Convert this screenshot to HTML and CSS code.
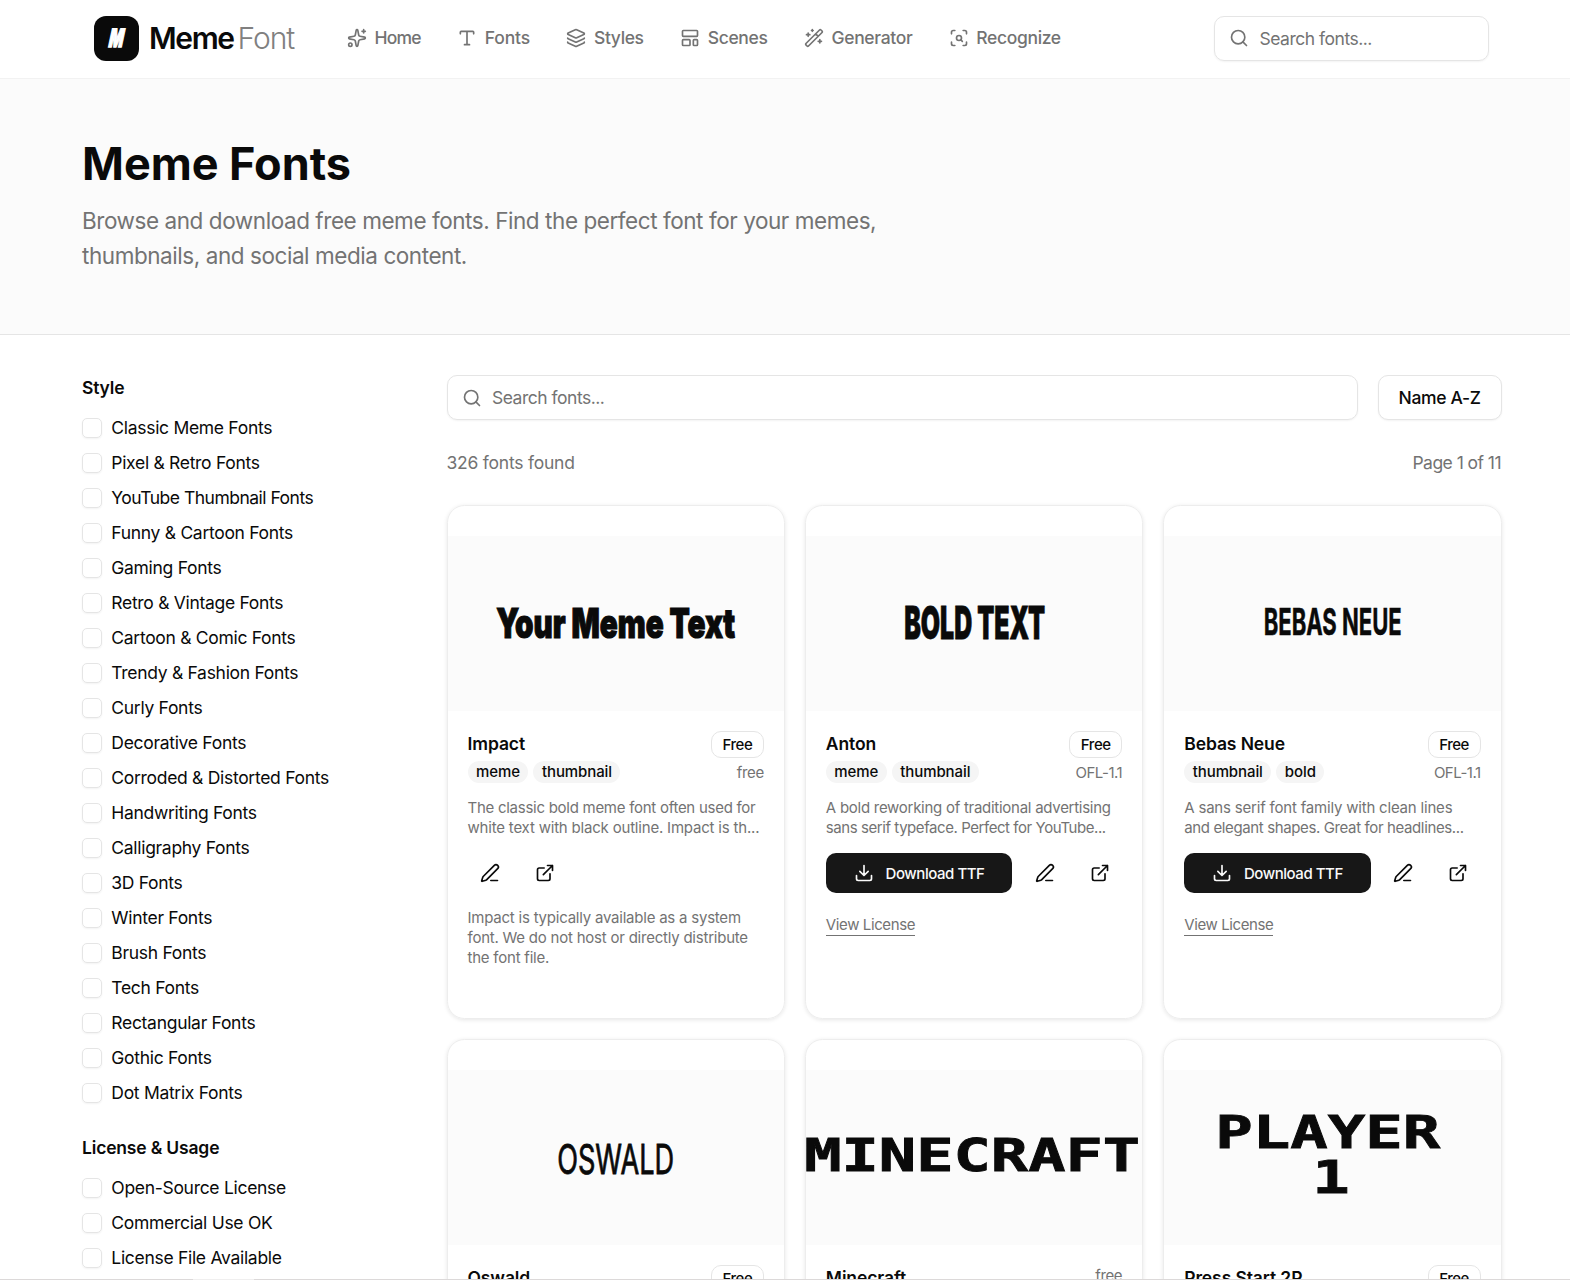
FILE: index.html
```html
<!DOCTYPE html>
<html lang="en">
<head>
<meta charset="utf-8">
<title>Meme Fonts</title>
<link rel="stylesheet" href="styles.css">
</head>
<body>
<svg class="sprite" aria-hidden="true">
  <symbol id="sparkles" viewBox="0 0 24 24"><path d="M11.017 2.814a1 1 0 0 1 1.966 0l1.051 5.558a2 2 0 0 0 1.594 1.594l5.558 1.051a1 1 0 0 1 0 1.966l-5.558 1.051a2 2 0 0 0-1.594 1.594l-1.051 5.558a1 1 0 0 1-1.966 0l-1.051-5.558a2 2 0 0 0-1.594-1.594l-5.558-1.051a1 1 0 0 1 0-1.966l5.558-1.051a2 2 0 0 0 1.594-1.594z"/><path d="M20 2v4M22 4h-4"/><circle cx="4" cy="20" r="2"/></symbol>
  <symbol id="type" viewBox="0 0 24 24"><path d="M12 4v16M4 7V5a1 1 0 0 1 1-1h14a1 1 0 0 1 1 1v2M9 20h6"/></symbol>
  <symbol id="layers" viewBox="0 0 24 24"><path d="M12.83 2.18a2 2 0 0 0-1.66 0L2.6 6.08a1 1 0 0 0 0 1.83l8.58 3.91a2 2 0 0 0 1.66 0l8.58-3.9a1 1 0 0 0 0-1.83z"/><path d="M2 12a1 1 0 0 0 .58.91l8.6 3.91a2 2 0 0 0 1.65 0l8.58-3.9A1 1 0 0 0 22 12"/><path d="M2 17a1 1 0 0 0 .58.91l8.6 3.91a2 2 0 0 0 1.65 0l8.58-3.9A1 1 0 0 0 22 17"/></symbol>
  <symbol id="template" viewBox="0 0 24 24"><rect width="18" height="7" x="3" y="3" rx="1"/><rect width="9" height="7" x="3" y="14" rx="1"/><rect width="5" height="7" x="16" y="14" rx="1"/></symbol>
  <symbol id="wand" viewBox="0 0 24 24"><path d="m21.64 3.64-1.28-1.28a1.21 1.21 0 0 0-1.72 0L2.36 18.64a1.21 1.21 0 0 0 0 1.72l1.28 1.28a1.2 1.2 0 0 0 1.72 0L21.64 5.36a1.2 1.2 0 0 0 0-1.72M14 7l3 3M5 6v4M19 14v4M10 2v2M7 8H3M21 16h-4M11 3H9"/></symbol>
  <symbol id="scan" viewBox="0 0 24 24"><path d="M3 7V5a2 2 0 0 1 2-2h2M17 3h2a2 2 0 0 1 2 2v2M21 17v2a2 2 0 0 1-2 2h-2M7 21H5a2 2 0 0 1-2-2v-2M16 16l-1.9-1.9"/><circle cx="12" cy="12" r="3"/></symbol>
  <symbol id="search" viewBox="0 0 24 24"><circle cx="11" cy="11" r="8"/><path d="m21 21-4.34-4.34"/></symbol>
  <symbol id="pen" viewBox="0 0 24 24"><path d="M13 21h8M21.174 6.812a1 1 0 0 0-3.986-3.987L3.842 16.174a2 2 0 0 0-.5.83l-1.321 4.352a.5.5 0 0 0 .623.622l4.353-1.32a2 2 0 0 0 .83-.497z"/></symbol>
  <symbol id="external" viewBox="0 0 24 24"><path d="M15 3h6v6M10 14 21 3M18 13v6a2 2 0 0 1-2 2H5a2 2 0 0 1-2-2V8a2 2 0 0 1 2-2h6"/></symbol>
  <symbol id="download" viewBox="0 0 24 24"><path d="M12 15V3M21 15v4a2 2 0 0 1-2 2H5a2 2 0 0 1-2-2v-4M7 10l5 5 5-5"/></symbol>
</svg>

<header class="topbar">
  <a class="brand">
    <span class="brand-mark"><span class="brand-letter">M</span></span>
    <span class="brand-name">Meme</span><span class="brand-light">Font</span>
  </a>
  <nav class="nav">
    <a class="nav-home"><svg class="icon"><use href="#sparkles"/></svg>Home</a>
    <a class="nav-fonts"><svg class="icon"><use href="#type"/></svg>Fonts</a>
    <a><svg class="icon"><use href="#layers"/></svg>Styles</a>
    <a><svg class="icon"><use href="#template"/></svg>Scenes</a>
    <a><svg class="icon"><use href="#wand"/></svg>Generator</a>
    <a><svg class="icon"><use href="#scan"/></svg>Recognize</a>
  </nav>
  <div class="search top-search"><svg class="icon"><use href="#search"/></svg><span>Search fonts...</span></div>
</header>

<section class="hero">
  <h1>Meme Fonts</h1>
  <p>Browse and download free meme fonts. Find the perfect font for your memes,<br>thumbnails, and social media content.</p>
</section>

<main class="layout">
  <aside class="filters">
    <h2>Style</h2>
    <ul>
      <li><i class="box"></i>Classic Meme Fonts</li>
      <li><i class="box"></i>Pixel &amp; Retro Fonts</li>
      <li><i class="box"></i><span class="snug">YouTube Thumbnail Fonts</span></li>
      <li><i class="box"></i>Funny &amp; Cartoon Fonts</li>
      <li><i class="box"></i>Gaming Fonts</li>
      <li><i class="box"></i>Retro &amp; Vintage Fonts</li>
      <li><i class="box"></i>Cartoon &amp; Comic Fonts</li>
      <li><i class="box"></i>Trendy &amp; Fashion Fonts</li>
      <li><i class="box"></i>Curly Fonts</li>
      <li><i class="box"></i>Decorative Fonts</li>
      <li><i class="box"></i>Corroded &amp; Distorted Fonts</li>
      <li><i class="box"></i>Handwriting Fonts</li>
      <li><i class="box"></i>Calligraphy Fonts</li>
      <li><i class="box"></i>3D Fonts</li>
      <li><i class="box"></i>Winter Fonts</li>
      <li><i class="box"></i>Brush Fonts</li>
      <li><i class="box"></i>Tech Fonts</li>
      <li><i class="box"></i>Rectangular Fonts</li>
      <li><i class="box"></i>Gothic Fonts</li>
      <li><i class="box"></i>Dot Matrix Fonts</li>
    </ul>
    <h2>License &amp; Usage</h2>
    <ul>
      <li><i class="box"></i>Open-Source License</li>
      <li><i class="box"></i>Commercial Use OK</li>
      <li><i class="box"></i>License File Available</li>
    </ul>
  </aside>

  <div class="results">
    <div class="toolbar">
      <div class="search"><svg class="icon"><use href="#search"/></svg><span>Search fonts...</span></div>
      <button class="sort">Name A-Z</button>
    </div>
    <div class="summary"><span>326 fonts found</span><span class="page">Page 1 of 11</span></div>

    <div class="grid">
      <article class="card">
        <svg class="preview" viewBox="0 0 336 175"><text class="impact" x="48" y="101.5" textLength="239" lengthAdjust="spacingAndGlyphs">Your Meme Text</text></svg>
        <div class="body">
          <div class="head"><h3>Impact</h3><span class="badge">Free</span></div>
          <div class="meta"><span class="tag">meme</span><span class="tag">thumbnail</span><span class="license">free</span></div>
          <p class="desc">The classic bold meme font often used for<br><span class="loose">white text with black outline. Impact is th...</span></p>
          <div class="actions"><a class="ghost"><svg class="icon"><use href="#pen"/></svg></a><a class="ghost"><svg class="icon"><use href="#external"/></svg></a></div>
          <p class="note">Impact is typically available as a system<br>font. We do not host or directly distribute<br>the font file.</p>
        </div>
      </article>

      <article class="card">
        <svg class="preview" viewBox="0 0 336 175"><text class="anton" x="98" y="102.5" textLength="141" lengthAdjust="spacingAndGlyphs">BOLD TEXT</text></svg>
        <div class="body">
          <div class="head"><h3>Anton</h3><span class="badge">Free</span></div>
          <div class="meta"><span class="tag">meme</span><span class="tag">thumbnail</span><span class="license ofl">OFL-1.1</span></div>
          <p class="desc">A bold reworking of traditional advertising<br><span class="snug">sans serif typeface. Perfect for YouTube...</span></p>
          <div class="actions"><a class="download"><svg class="icon"><use href="#download"/></svg>Download TTF</a><a class="ghost"><svg class="icon"><use href="#pen"/></svg></a><a class="ghost"><svg class="icon"><use href="#external"/></svg></a></div>
          <a class="terms">View License</a>
        </div>
      </article>

      <article class="card">
        <svg class="preview" viewBox="0 0 336 175"><text class="bebas" x="99.5" y="99" textLength="138" lengthAdjust="spacingAndGlyphs">BEBAS NEUE</text></svg>
        <div class="body">
          <div class="head"><h3>Bebas Neue</h3><span class="badge">Free</span></div>
          <div class="meta"><span class="tag">thumbnail</span><span class="tag">bold</span><span class="license ofl">OFL-1.1</span></div>
          <p class="desc"><span class="loose">A sans serif font family with clean lines</span><br><span class="tight">and elegant shapes. Great for headlines...</span></p>
          <div class="actions"><a class="download"><svg class="icon"><use href="#download"/></svg>Download TTF</a><a class="ghost"><svg class="icon"><use href="#pen"/></svg></a><a class="ghost"><svg class="icon"><use href="#external"/></svg></a></div>
          <a class="terms">View License</a>
        </div>
      </article>

      <article class="card">
        <svg class="preview" viewBox="0 0 336 175"><text class="oswald" x="109" y="104" textLength="117" lengthAdjust="spacingAndGlyphs">OSWALD</text></svg>
        <div class="body">
          <div class="head"><h3>Oswald</h3><span class="badge">Free</span></div>
        </div>
      </article>

      <article class="card">
        <svg class="preview" viewBox="0 0 336 175"><text class="pixel" x="-2" y="101" textLength="336" lengthAdjust="spacingAndGlyphs">MINECRAFT</text></svg>
        <div class="body">
          <div class="head"><h3>Minecraft</h3><span class="license plain">free</span></div>
        </div>
      </article>

      <article class="card">
        <svg class="preview" viewBox="0 0 336 175"><text class="pixel" x="51" y="78" textLength="225" lengthAdjust="spacingAndGlyphs">PLAYER</text><text class="pixel" x="148" y="123" textLength="37.5" lengthAdjust="spacingAndGlyphs">1</text></svg>
        <div class="body">
          <div class="head"><h3>Press Start 2P</h3><span class="badge">Free</span></div>
        </div>
      </article>
    </div>
  </div>
</main>
<div class="edge"></div>
</body>
</html>
```
FILE: styles.css
```css
* { box-sizing: border-box; margin: 0; padding: 0; }
html, body { height: 1280px; overflow: hidden; }
body {
  position: relative;
  font: 400 17.5px/25px Inter, "Liberation Sans", sans-serif;
  letter-spacing: -0.02em;
  color: #0a0a0a;
  background: #fff;
}
ul { list-style: none; }
.sprite { position: absolute; width: 0; height: 0; }
.icon {
  width: 20px; height: 20px; flex: none;
  fill: none; stroke: currentColor; stroke-width: 2;
  stroke-linecap: round; stroke-linejoin: round;
}

/* Top bar */
.topbar {
  display: flex; align-items: center;
  height: 79px; padding: 0 81px 2px 94px;
  border-bottom: 1px solid #f2f2f2;
}
.brand { display: flex; align-items: center; width: 253px; }
.brand-mark {
  display: flex; align-items: center; justify-content: center;
  width: 45px; height: 45px; margin-right: 10px;
  border-radius: 12px; background: #0a0a0a; color: #fff;
}
.brand-letter {
  font-size: 25px; font-weight: 900; line-height: 26px; letter-spacing: 0;
  transform: skewX(-12deg) scaleX(.6);
  -webkit-text-stroke: 1.6px #fff;
}
.brand-name { width: 88.5px; font-size: 30px; font-weight: 600; letter-spacing: -0.046em; }
.brand-light { font-size: 30px; font-weight: 300; letter-spacing: -0.035em; color: #808080; }
.nav { display: flex; gap: 36.5px; margin-bottom: 1px; color: #737373; font-weight: 500; }
.nav a { display: flex; align-items: center; gap: 7.5px; height: 23px; }
.nav .nav-home { letter-spacing: -0.045em; }
.nav .nav-fonts { letter-spacing: -0.01em; }
.search {
  display: flex; align-items: center; flex: 1; gap: 10.5px;
  height: 45px; padding: 0 14px;
  border: 1px solid #e5e5e5; border-radius: 10px;
  color: #737373; letter-spacing: -0.028em;
  box-shadow: 0 1px 2px rgba(0, 0, 0, .05);
}
.top-search { flex: none; width: 275px; margin-left: auto; }
.top-search span { padding-top: 1px; }

/* Hero */
.hero {
  height: 256px; padding: 60px 82px 0;
  border-bottom: 1px solid #e5e5e5; background: #fbfbfb;
}
.hero h1 { font-size: 45px; line-height: 50px; font-weight: 700; letter-spacing: -0.001em; }
.hero p { margin-top: 14px; font-size: 22.5px; line-height: 35px; color: #737373; letter-spacing: -0.0195em; }

/* Filters */
.layout { display: flex; padding: 40px 68.4px 0 82px; }
.filters { width: 364.5px; flex: none; }
.filters h2 { font-size: 17.5px; line-height: 25px; font-weight: 600; letter-spacing: -0.01em; }
.filters ul { display: grid; gap: 10px; padding: 15px 0 30px; }
.filters li { display: flex; align-items: center; gap: 9.3px; letter-spacing: -0.017em; }
.box {
  width: 20px; height: 20px; border: 1px solid #e5e5e5; border-radius: 5px;
  box-shadow: 0 1px 2px rgba(0, 0, 0, .05);
}
.snug { letter-spacing: -0.029em; }
.loose { letter-spacing: -0.013em; }
.tight { letter-spacing: -0.025em; }

/* Results */
.results { flex: 1; min-width: 0; }
.toolbar { display: flex; gap: 20px; }
.sort {
  width: 124px; height: 45px; border: 1px solid #e5e5e5; border-radius: 10px;
  background: #fff; color: #0a0a0a; font: inherit; font-weight: 500; letter-spacing: -0.02em;
  box-shadow: 0 1px 2px rgba(0, 0, 0, .05);
}
.summary {
  display: flex; justify-content: space-between; padding: 30px 0;
  color: #737373; letter-spacing: -0.013em;
}
.page { margin-right: .6px; letter-spacing: -0.031em; }
.grid { display: grid; grid-template-columns: repeat(3, 1fr); grid-auto-rows: 514px; gap: 20px; }
.card {
  padding-top: 30px; overflow: hidden;
  border: 1px solid #ededed; border-radius: 17.5px;
  box-shadow: 0 1px 4px rgba(0, 0, 0, .1);
}
.preview { display: block; width: 100%; height: 175px; background: #fbfbfb; fill: #0a0a0a; overflow: hidden; }
.impact { font: 900 41px Inter, sans-serif; letter-spacing: 0; stroke: #0a0a0a; stroke-width: 1.2px; }
.anton { font: 900 45px Inter, sans-serif; letter-spacing: 0; stroke: #0a0a0a; stroke-width: .8px; }
.bebas { font: 700 37.5px Inter, sans-serif; letter-spacing: 0; stroke: #0a0a0a; stroke-width: .5px; }
.oswald { font: 400 41px Inter, sans-serif; letter-spacing: 0; stroke: #0a0a0a; stroke-width: .8px; }
.pixel { font: 700 45px "DejaVu Sans Mono", monospace; letter-spacing: 0; stroke: #0a0a0a; stroke-width: .8px; }

.body { padding: 20px 20px 0; }
.head { display: flex; justify-content: space-between; height: 27px; }
.head h3 { font-size: 17.5px; line-height: 25px; font-weight: 600; letter-spacing: -0.006em; }
.badge {
  width: 53px; height: 27px; line-height: 25px; text-align: center;
  border: 1px solid #e5e5e5; border-radius: 10px;
  font-size: 15px; font-weight: 500; letter-spacing: -0.03em;
}
.meta { display: flex; gap: 5px; margin-top: 3px; }
.tag {
  height: 22px; line-height: 21px; padding: 0 8.5px; border-radius: 11px;
  background: #f5f5f5; font-size: 15px; font-weight: 500; letter-spacing: -0.006em;
}
.license { margin-left: auto; font-size: 15px; line-height: 24px; color: #737373; }
.ofl { letter-spacing: -0.033em; }
.plain { line-height: 22px; }
.desc, .note { font-size: 15px; line-height: 20px; color: #737373; letter-spacing: -0.018em; }
.desc { margin-top: 13px; }
.actions { display: flex; gap: 10px; height: 40px; margin-top: 15px; }
.ghost { display: flex; align-items: center; justify-content: center; width: 45px; }
.download {
  display: flex; align-items: center; justify-content: center; flex: 1; gap: 12px;
  border-radius: 10px; background: #171717; color: #fafafa;
  font-size: 15px; font-weight: 500; letter-spacing: -0.03em;
}
.note { margin-top: 15px; letter-spacing: -0.015em; }
.terms {
  display: inline-block; margin-top: 22px;
  border-bottom: 1px solid #737373;
  font-size: 15px; line-height: 20px; color: #737373; letter-spacing: -0.026em;
}
.edge {
  position: absolute; left: 0; bottom: 0; width: 100%; height: 1px;
  background: linear-gradient(90deg, #dcd9d9 193px, #f0efef 193px 254px, #dcd9d9 254px);
}
```
